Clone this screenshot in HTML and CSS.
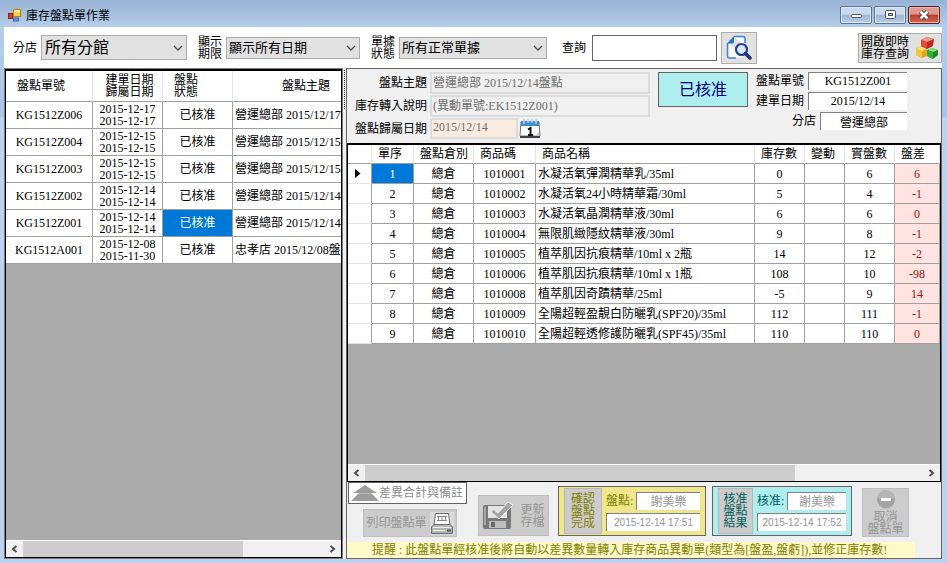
FILE: index.html
```html
<!DOCTYPE html>
<html lang="zh-Hant">
<head>
<meta charset="utf-8">
<title>庫存盤點單作業</title>
<link rel="stylesheet" href="styles.css">
</head>
<body>
<header class="titlebar">
  <svg class="app-icon" width="14" height="14" viewBox="0 0 14 14" aria-hidden="true">
    <rect x="0.5" y="5.5" width="4" height="5" fill="#d8402c" stroke="#8f2016"/>
    <rect x="5.5" y="1.5" width="7" height="7" fill="#ffd24a" stroke="#b98412"/>
    <rect x="6" y="2" width="6" height="2" fill="#ffe993"/>
    <rect x="5.5" y="10" width="5" height="3" fill="#5f97ea" stroke="#3a66b0"/>
  </svg>
  <h1 class="title">庫存盤點單作業</h1>
  <div class="window-buttons">
    <button class="win-btn" aria-label="最小化"><svg width="30" height="16" viewBox="0 0 30 16"><rect x="10.500" y="7.500" width="10" height="3" rx="1" fill="#fff" stroke="#4d5560"/></svg></button>
    <button class="win-btn" aria-label="最大化"><svg width="30" height="16" viewBox="0 0 30 16"><rect x="10.500" y="3.500" width="10" height="8" rx="1" fill="#fff" stroke="#4d5560"/><rect x="13.500" y="6.500" width="4" height="2" fill="#9fb9d9" stroke="#4d5560"/></svg></button>
    <button class="win-btn win-close" aria-label="關閉"><svg width="30" height="16" viewBox="0 0 30 16"><path d="M11.500 4.500 18.500 11.500M18.500 4.500 11.500 11.500" stroke="#5d3a3c" stroke-width="4.500"/><path d="M11.500 4.500 18.500 11.500M18.500 4.500 11.500 11.500" stroke="#fff" stroke-width="2.500"/></svg></button>
  </div>
</header>

<main class="client">
  <form class="toolbar">
    <label class="tb-label" for="branch">分店</label>
    <div class="combo combo-branch">
      <select id="branch"><option>所有分館</option></select>
      <svg class="chevron" width="10" height="6" viewBox="0 0 10 6"><path d="M1 1 5 5 9 1" fill="none" stroke="#505050" stroke-width="1.300"/></svg>
    </div>
    <label class="tb-label" for="period">顯示<br>期限</label>
    <div class="combo combo-period">
      <select id="period"><option>顯示所有日期</option></select>
      <svg class="chevron" width="10" height="6" viewBox="0 0 10 6"><path d="M1 1 5 5 9 1" fill="none" stroke="#505050" stroke-width="1.300"/></svg>
    </div>
    <label class="tb-label" for="state">單據<br>狀態</label>
    <div class="combo combo-state">
      <select id="state"><option>所有正常單據</option></select>
      <svg class="chevron" width="10" height="6" viewBox="0 0 10 6"><path d="M1 1 5 5 9 1" fill="none" stroke="#505050" stroke-width="1.300"/></svg>
    </div>
    <label class="tb-label tb-query" for="query">查詢</label>
    <input class="query" id="query" type="text">
    <button class="push search" type="button" aria-label="搜尋">
      <svg width="26" height="26" viewBox="0 0 26 26">
        <path d="M8 2.500H16.500Q18.500 2.500 18.500 4.500V10M18.500 22.500H4.500Q2.500 22.500 2.500 20.500V8Z" fill="#f6f9fd"/>
        <path d="M8 1.500H17Q19 1.500 19 3.500V8M10 23H3.500Q1.500 23 1.500 21V8" fill="none" stroke="#3f86cd" stroke-width="1.500"/>
        <path d="M8 1 1 8.500H6.500Q8 8.500 8 7Z" fill="#2c76c2"/>
        <circle cx="15.500" cy="14.500" r="5.500" fill="#dbe9f7" stroke="#23408a" stroke-width="2.200"/>
        <path d="M19.500 18.500 24 23" stroke="#23347c" stroke-width="3.500" stroke-linecap="round"/>
      </svg>
    </button>
    <button class="push stock" type="button">
      <span>開啟即時<br>庫存查詢</span>
      <svg width="24" height="24" viewBox="0 0 24 24">
        <path d="M1 12 7 10 12 13V20L7 22 1 19Z" fill="#e3a31c"/><path d="M1 12 7 10 12 13 7 15Z" fill="#ffe27a"/><path d="M1 12 7 15V22L1 19Z" fill="#f6c53a"/>
        <path d="M12 14 17 12 23 14V19L18 23 12 20Z" fill="#1d8a25"/><path d="M12 14 17 12 23 14 18 16Z" fill="#8ee07f"/><path d="M12 14 18 16V23L12 20Z" fill="#2fb238"/>
        <path d="M6 4 12 1 19 3 18 10 12 13 6 10Z" fill="#b92a20"/><path d="M6 4 12 1 19 3 12 6Z" fill="#f49a8c"/><path d="M6 4 12 6V13L6 10Z" fill="#df4a3a"/>
      </svg>
    </button>
  </form>

  <div class="split">
    <section class="list-panel">
      <div class="grid-area">
        <table class="grid list-grid">
          <colgroup><col class="l-no"><col class="l-date"><col class="l-state"><col class="l-topic"></colgroup>
          <thead><tr><th>盤點單號</th><th class="center">建單日期<br>歸屬日期</th><th>盤點<br>狀態</th><th class="center">盤點主題</th></tr></thead>
          <tbody>
            <tr><td>KG1512Z006</td><td>2015-12-17<br>2015-12-17</td><td>已核准</td><td>營運總部 2015/12/17盤點</td></tr>
            <tr><td>KG1512Z004</td><td>2015-12-15<br>2015-12-15</td><td>已核准</td><td>營運總部 2015/12/15盤點</td></tr>
            <tr><td>KG1512Z003</td><td>2015-12-15<br>2015-12-15</td><td>已核准</td><td>營運總部 2015/12/15盤點</td></tr>
            <tr><td>KG1512Z002</td><td>2015-12-14<br>2015-12-14</td><td>已核准</td><td>營運總部 2015/12/14盤點</td></tr>
            <tr><td>KG1512Z001</td><td>2015-12-14<br>2015-12-14</td><td class="selected">已核准</td><td>營運總部 2015/12/14盤點</td></tr>
            <tr><td>KG1512A001</td><td>2015-12-08<br>2015-11-30</td><td>已核准</td><td>忠孝店 2015/12/08盤點</td></tr>
          </tbody>
        </table>
      </div>
      <div class="scrollbar">
        <button class="arrow" aria-label="向左捲動"><svg width="7" height="8" viewBox="0 0 7 8"><path d="M5.500 1 2 4 5.500 7" fill="none" stroke="#505050" stroke-width="2"/></svg></button>
        <div class="track"><div class="thumb thumb-list"></div></div>
        <button class="arrow" aria-label="向右捲動"><svg width="7" height="8" viewBox="0 0 7 8"><path d="M1.500 1 5 4 1.500 7" fill="none" stroke="#505050" stroke-width="2"/></svg></button>
      </div>
    </section>

    <div class="splitter"></div>

    <section class="detail-panel">
      <form class="info">
        <div class="info-main">
          <label for="topic">盤點主題</label>
          <input class="off" id="topic" value="營運總部 2015/12/14盤點" disabled>
          <label for="source">庫存轉入說明</label>
          <input class="off" id="source" value="(異動單號:EK1512Z001)" disabled>
          <label for="day">盤點歸屬日期</label>
          <div class="day-row">
            <input class="off day" id="day" value="2015/12/14" disabled>
            <button class="cal" type="button" aria-label="選擇日期">
              <svg width="22" height="20" viewBox="0 0 22 20">
                <path d="M2 3H20L21 17H1Z" fill="#fff" stroke="#777"/>
                <path d="M1 17H21V19H1Z" fill="#3c434b"/>
                <path d="M2 2H20V7H2Z" fill="#3b8ed0"/>
                <path d="M5 0V5M9 0V4M13 0V4M17 0V5" stroke="#c7d4df" stroke-width="1.500"/>
                <path d="M9 10.500 11.500 9V16M9 16H14" fill="none" stroke="#111" stroke-width="2"/>
                <path d="M16 17 20 13V17Z" fill="#c9c9c9"/>
              </svg>
            </button>
          </div>
        </div>
        <button class="status" type="button">已核准</button>
        <div class="info-side">
          <div class="side-row"><label for="no">盤點單號</label><input id="no" value="KG1512Z001" readonly></div>
          <div class="side-row"><label for="made">建單日期</label><input id="made" value="2015/12/14" readonly></div>
          <div class="side-row"><label for="shop">分店</label><input class="shop" id="shop" value="營運總部" readonly></div>
        </div>
      </form>

      <div class="detail-box">
        <div class="grid-area">
          <table class="grid item-grid">
            <colgroup><col class="i-mark"><col class="i-seq"><col class="i-store"><col class="i-code"><col><col class="i-num"><col class="i-move"><col class="i-num"><col class="i-diff"></colgroup>
            <thead><tr><th></th><th>單序</th><th>盤點倉別</th><th>商品碼</th><th>商品名稱</th><th>庫存數</th><th>變動</th><th>實盤數</th><th>盤差</th></tr></thead>
            <tbody>
              <tr><td><svg class="pointer" width="6" height="9" viewBox="0 0 6 9"><path d="M0 0 5.500 4.500 0 9Z" fill="#000"/></svg></td><td class="selected">1</td><td>總倉</td><td>1010001</td><td>水凝活氧彈潤精華乳/35ml</td><td>0</td><td></td><td>6</td><td>6</td></tr>
              <tr><td></td><td>2</td><td>總倉</td><td>1010002</td><td>水凝活氧24小時精華霜/30ml</td><td>5</td><td></td><td>4</td><td>-1</td></tr>
              <tr><td></td><td>3</td><td>總倉</td><td>1010003</td><td>水凝活氧晶潤精華液/30ml</td><td>6</td><td></td><td>6</td><td>0</td></tr>
              <tr><td></td><td>4</td><td>總倉</td><td>1010004</td><td>無限肌緻隱紋精華液/30ml</td><td>9</td><td></td><td>8</td><td>-1</td></tr>
              <tr><td></td><td>5</td><td>總倉</td><td>1010005</td><td>植萃肌因抗痕精華/10ml x 2瓶</td><td>14</td><td></td><td>12</td><td>-2</td></tr>
              <tr><td></td><td>6</td><td>總倉</td><td>1010006</td><td>植萃肌因抗痕精華/10ml x 1瓶</td><td>108</td><td></td><td>10</td><td>-98</td></tr>
              <tr><td></td><td>7</td><td>總倉</td><td>1010008</td><td>植萃肌因奇蹟精華/25ml</td><td>-5</td><td></td><td>9</td><td>14</td></tr>
              <tr><td></td><td>8</td><td>總倉</td><td>1010009</td><td>全陽超輕盈靚白防曬乳(SPF20)/35ml</td><td>112</td><td></td><td>111</td><td>-1</td></tr>
              <tr><td></td><td>9</td><td>總倉</td><td>1010010</td><td>全陽超輕透修護防曬乳(SPF45)/35ml</td><td>110</td><td></td><td>110</td><td>0</td></tr>
            </tbody>
          </table>
        </div>
        <div class="scrollbar">
          <button class="arrow" aria-label="向左捲動"><svg width="7" height="8" viewBox="0 0 7 8"><path d="M5.500 1 2 4 5.500 7" fill="none" stroke="#505050" stroke-width="2"/></svg></button>
          <div class="track"><div class="thumb thumb-detail"></div></div>
          <button class="arrow" aria-label="向右捲動"><svg width="7" height="8" viewBox="0 0 7 8"><path d="M1.500 1 5 4 1.500 7" fill="none" stroke="#505050" stroke-width="2"/></svg></button>
        </div>
      </div>

      <div class="actions">
        <div class="left-actions">
          <button class="summary">
            <svg width="28" height="16" viewBox="0 0 28 16"><path d="M14 0 26 8H20L28 16H0L8 8H2Z" fill="#9d9d9d"/><path d="M8 8.500H20" stroke="#b4b4b4"/></svg>
            差異合計與備註
          </button>
          <button class="push disabled print" disabled>
            列印盤點單
            <svg width="24" height="23" viewBox="0 0 24 23">
              <rect width="24" height="23" fill="#dadada"/>
              <path d="M5.500 1.500H18.500L20 13H4Z" fill="#fff" stroke="#6c6c6c"/>
              <path d="M7 4.500H17M7 8.500H17M8.500 4V9M12 4V9M15.500 4V9" stroke="#858585"/>
              <path d="M4 12.500H20L22.500 15V21.500H1.500V15Z" fill="#b5b5b5" stroke="#6c6c6c"/>
              <path d="M3 15.500H21M3 18.500H15" stroke="#f2f2f2"/><path d="M17 18.500H21" stroke="#555" stroke-width="2"/>
            </svg>
          </button>
        </div>
        <button class="push disabled save" disabled>
          <svg width="32" height="28" viewBox="0 0 32 28">
            <path d="M3 3H26L29 6V25Q29 27 27 27H3Q1 27 1 25V5Q1 3 3 3Z" fill="#777"/>
            <path d="M2 6 4 4V23H2Z" fill="#a5a5a5"/>
            <rect x="6" y="4" width="19" height="12" fill="#e4e4e4"/>
            <rect x="7" y="19" width="17" height="7" fill="#bcbcbc"/><rect x="9" y="20" width="4" height="5" fill="#666"/>
            <path d="M11 7 16 11 26 0 31 3 17 17 9 10Z" fill="#a6a6a6" stroke="#eee"/>
          </svg>
          <span>更新<br>存檔</span>
        </button>
        <div class="step step-confirm">
          <button class="push step-btn">確認<br>盤點<br>完成</button>
          <div class="step-fields">
            <label for="counter">盤點:</label><input id="counter" value="謝美樂" readonly>
            <input class="time" aria-label="盤點時間" value="2015-12-14 17:51" readonly>
          </div>
        </div>
        <div class="step step-approve">
          <button class="push step-btn">核准<br>盤點<br>結果</button>
          <div class="step-fields">
            <label for="approver">核准:</label><input id="approver" value="謝美樂" readonly>
            <input class="time" aria-label="核准時間" value="2015-12-14 17:52" readonly>
          </div>
        </div>
        <button class="push disabled cancel" disabled>
          <svg width="20" height="19" viewBox="0 0 20 19"><circle cx="10" cy="9.500" r="9" fill="#a2a2a2"/><path d="M2 8A8 8 0 0 1 18 8Q10 11 2 8Z" fill="#b5b5b5"/><rect x="5" y="8" width="10" height="3" fill="#fff"/></svg>
          <span>取消<br>盤點單</span>
        </button>
      </div>
      <p class="notice">提醒 : 此盤點單經核准後將自動以差異數量轉入庫存商品異動單(類型為[盤盈,盤虧]),並修正庫存數!</p>
    </section>
  </div>
</main>
</body>
</html>
```
FILE: styles.css
```css
* { box-sizing: border-box; }

body {
  margin: 0;
  padding: 0 5px 4px 4px;
  height: 100vh;
  display: flex;
  flex-direction: column;
  background: linear-gradient(#98b3d4 0, #b4cdea 27px, #abc4e3 116px, #bcd2ee 118px);
  font: 12px/12px "Liberation Serif", "Noto Sans CJK TC", serif;
  color: #000;
  overflow: hidden;
}

button, input, select { font: inherit; color: inherit; margin: 0; padding: 0; border-radius: 0; }
button { cursor: default; }
svg { display: block; flex: none; }

/* title bar */
.titlebar { display: flex; height: 27px; padding-left: 4px; }
.app-icon { margin-top: 8px; }
.title { margin: 10px 0 0 4px; font-size: 12px; font-weight: 400; flex: 1; }
.window-buttons { display: flex; gap: 2px; padding: 6px 2px 0 0; }
.win-btn {
  width: 32px;
  height: 18px;
  border: 1px solid #5d7390;
  border-radius: 2px;
  background: linear-gradient(#c9daee 45%, #9cb6d5 50%, #b6cde8);
  box-shadow: inset 0 0 0 1px #dce8f5;
}
.win-close {
  border-color: #5a2328;
  background: linear-gradient(#dd9a90 45%, #b93a2a 50%, #cf6a50);
  box-shadow: inset 0 0 0 1px #e8b5ab;
}

/* client area */
.client { flex: 1; min-height: 0; display: flex; flex-direction: column; background: #f0f0f0; }
.toolbar { display: flex; align-items: center; height: 41px; padding-left: 9px; background: #fff; flex: none; }
.tb-label { width: 24px; }
.combo { display: grid; align-items: center; margin: 0 11px 0 4px; }
.combo select, .combo .chevron { grid-area: 1 / 1; }
.combo select {
  appearance: none;
  width: 100%;
  height: 22px;
  padding-left: 2px;
  border: 1px solid #adadad;
  background: #e1e1e1;
  font-size: 13px;
  line-height: 20px;
}
.combo .chevron { justify-self: end; margin-right: 4px; pointer-events: none; }
.combo-branch { width: 146px; }
.combo-branch select { height: 25px; font-size: 16px; line-height: 23px; padding-left: 3px; }
.combo-period { width: 134px; }
.combo-state { width: 148px; }
.tb-query { margin-left: 4px; }
.query { width: 125px; height: 26px; margin: 0 4px 0 6px; padding: 0 4px; border: 1px solid #646464; background: #fff; }
.push { border: 1px solid #adadad; background: #e1e1e1; display: flex; align-items: center; justify-content: center; }
.search { width: 36px; height: 32px; }
.stock { width: 84px; height: 30px; margin-left: auto; gap: 6px; }

/* two panels */
.split { flex: 1; min-height: 0; display: flex; }
.list-panel {
  width: 339px;
  flex: none;
  display: flex;
  flex-direction: column;
  border: 1px solid #000;
  border-width: 3px 2px 2px 2px;
  outline: 1px solid #808080;
  outline-offset: -1px;
}
.splitter {
  width: 3px;
  flex: none;
  padding: 2px 0 450px;
  background: conic-gradient(#333 25%, #f0f0f0 0) 0 2px / 2px 2px;
  background-clip: content-box;
}
.detail-panel { flex: 1; min-width: 0; display: flex; flex-direction: column; border: 1px solid #646464; }

/* data grids */
.grid-area { flex: 1; min-height: 0; overflow: hidden; background: #ababab; }
.grid { table-layout: fixed; border-collapse: separate; border-spacing: 0; background: #fff; }
.grid th, .grid td { padding: 0; border-right: 1px solid #a0a0a0; border-bottom: 1px solid #a0a0a0; white-space: nowrap; overflow: hidden; text-align: center; }
.grid th { font-weight: 400; text-align: left; border-right-color: #e5e5e5; }
.grid .selected { background: #0078d7; color: #fff; }

.list-grid { width: 370px; }
.l-no { width: 87px; }
.l-date { width: 70px; }
.l-state { width: 70px; }
.list-grid th { height: 31px; padding-left: 11px; }
.list-grid th.center { padding-left: 4px; text-align: center; }
.list-grid td { height: 27px; }
.list-grid td:last-child { text-align: left; padding-left: 2px; }

.item-grid { width: 100%; }
.i-mark { width: 24px; }
.i-seq { width: 42px; }
.i-store { width: 60px; }
.i-code { width: 62px; }
.i-num { width: 50px; }
.i-move { width: 40px; }
.i-diff { width: 45px; }
.item-grid th { height: 19px; padding-left: 6px; }
.item-grid td { height: 20px; }
.item-grid td:first-child { border-bottom-color: #e5e5e5; }
.item-grid td:nth-child(5) { text-align: left; padding-left: 2px; }
.item-grid td:last-child { background: #ffe4e1; color: #a01010; }
.pointer { margin-left: 7px; }

.scrollbar { display: flex; flex: none; height: 17px; background: #f0f0f0; border-top: 1px solid #fff; }
.arrow { width: 17px; border: 0; background: none; display: grid; place-items: center; }
.track { flex: 1; display: flex; }
.thumb { background: #cdcdcd; }
.thumb-list { width: 73%; }
.thumb-detail { width: 77%; }

/* document header fields */
.info { display: flex; align-items: flex-start; height: 74px; flex: none; padding-top: 3px; }
.info-main { display: grid; grid-template-columns: 80px 220px; column-gap: 3px; row-gap: 1px; align-items: center; }
.info-main label { text-align: right; }
.off { width: 100%; height: 22px; padding: 0 0 3px 1px; border: 2px solid #dcdcdc; background: #f0f0f0; color: #6d6d6d; }
.day-row { display: flex; gap: 1px; }
.day { width: 88px; height: 21px; background: #faebe0; }
.cal { border: 0; background: none; }
.status { width: 90px; height: 35px; margin-left: 8px; border: 1px solid #646464; background: #afeeee; color: #000080; font-size: 16px; }
.info-side { display: flex; flex-direction: column; gap: 2px; margin-left: 8px; width: 151px; }
.side-row { display: flex; justify-content: flex-end; align-items: center; gap: 4px; }
.side-row input { width: 99px; height: 18px; text-align: center; border: 0; border-top: 1px solid #808080; border-left: 1px solid #808080; background: #fff; }
.side-row .shop { width: 87px; }

.detail-box { flex: 1; min-height: 0; display: flex; flex-direction: column; border: 1px solid #000; border-top-width: 2px; }

/* action buttons */
.actions { display: flex; height: 60px; flex: none; }
.left-actions { width: 120px; display: flex; flex-direction: column; align-items: flex-start; gap: 5px; padding-left: 1px; }
.summary { display: flex; align-items: center; width: 119px; height: 22px; padding-left: 2px; border: 1px solid #646464; background: #fff; color: #8c8c8c; white-space: nowrap; }
.disabled { background: #ccc; border-color: #bfbfbf; color: #969696; }
.print { width: 94px; height: 28px; margin-left: 15px; gap: 3px; white-space: nowrap; }
.save { width: 71px; height: 41px; margin: 13px 0 0 11px; gap: 6px; }
.step { display: flex; gap: 4px; height: 50px; margin: 4px 0 0 6px; padding: 1px 5px; border: 1px solid #646464; }
.step-confirm { width: 148px; margin-left: 9px; background: #f0e68c; color: #808000; }
.step-approve { width: 140px; background: #afeeee; color: #006060; }
.step-btn { width: 38px; flex: none; background: #ccc; border-color: #b8b8b8; }
.step-approve .step-btn { width: 35px; }
.step-fields { flex: 1; min-width: 0; display: grid; grid-template-columns: 30px 1fr; align-content: center; align-items: center; gap: 3px 0; }
.step-fields input { width: 100%; min-width: 0; height: 18px; text-align: center; border: 0; border-top: 1px solid #808080; border-left: 1px solid #808080; background: #fff; color: #969696; }
.step-fields .time { grid-column: 1 / 3; font-family: "Liberation Sans", sans-serif; font-size: 10px; }
.cancel { flex-direction: column; width: 47px; height: 49px; margin: 6px 0 0 10px; gap: 2px; white-space: nowrap; }

.notice { margin: 0 26px 0 0; padding-left: 25px; height: 16px; line-height: 16px; flex: none; background: #fffac8; color: #808000; white-space: nowrap; }
```
